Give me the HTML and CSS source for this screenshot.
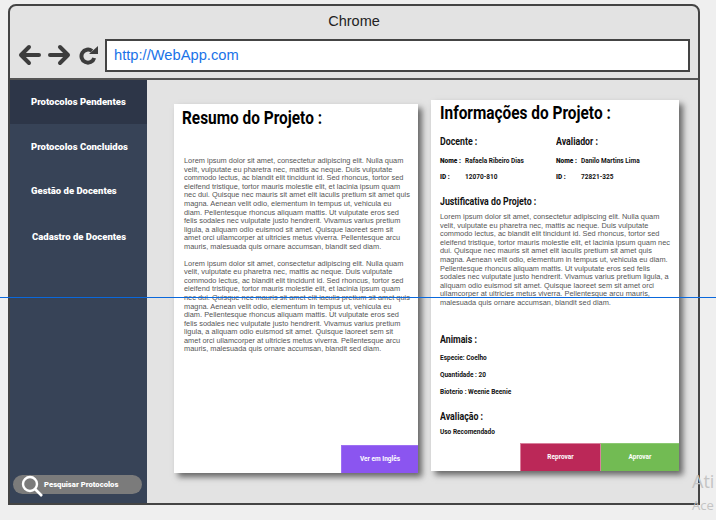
FILE: index.html
```html
<!doctype html>
<html>
<head>
<meta charset="utf-8">
<title>Chrome</title>
<link rel="stylesheet" href="styles.css">
</head>
<body>
<!--janela do navegador-->
<div class="window">
	<div class="title">Chrome</div>
	<div class="toolbar">
		<svg class="tool-icon" width="24" height="24" viewBox="0 0 24 24"><path d="M21 12H3M11 4l-8 8 8 8" fill="none" stroke="#3d3d3d" stroke-width="4" stroke-linecap="round" stroke-linejoin="round"/></svg>
		<svg class="tool-icon" width="24" height="24" viewBox="0 0 24 24"><path d="M3 12h18M13 4l8 8-8 8" fill="none" stroke="#3d3d3d" stroke-width="4" stroke-linecap="round" stroke-linejoin="round"/></svg>
		<svg class="tool-icon" width="22" height="22" viewBox="0 0 22 22"><path d="M18.2 15A6.5 6.5 0 1 1 16 8" fill="none" stroke="#3d3d3d" stroke-width="4"/><path d="M13 11h9V3z" fill="#3d3d3d"/></svg>
		<div class="url">http://WebApp.com</div>
	</div>
	<div class="app">
		<!--menu lateral-->
		<div class="sidebar">
			<div class="nav nav-active">Protocolos Pendentes</div>
			<div class="nav nav-second">Protocolos Concluidos</div>
			<div class="nav">Gestão de Docentes</div>
			<div class="nav nav-last">Cadastro de Docentes</div>
			<div class="search">
				<svg class="search-icon" width="24" height="22" viewBox="0 0 24 22"><circle cx="10" cy="9" r="7" fill="none" stroke="#fff" stroke-width="2.4"/><path d="M15 14l7 7" stroke="#fff" stroke-width="2.6"/></svg>
				<span>Pesquisar Protocolos</span>
			</div>
		</div>
		<div class="content">
			<!--resumo-->
			<div class="card card-left">
				<h1>Resumo do Projeto :</h1>
				<p class="lorem lorem-first">Lorem ipsum dolor sit amet, consectetur adipiscing elit. Nulla quam velit, vulputate eu pharetra nec, mattis ac neque. Duis vulputate commodo lectus, ac blandit elit tincidunt id. Sed rhoncus, tortor sed eleifend tristique, tortor mauris molestie elit, et lacinia ipsum quam nec dui. Quisque nec mauris sit amet elit iaculis pretium sit amet quis magna. Aenean velit odio, elementum in tempus ut, vehicula eu diam. Pellentesque rhoncus aliquam mattis. Ut vulputate eros sed felis sodales nec vulputate justo hendrerit. Vivamus varius pretium ligula, a aliquam odio euismod sit amet. Quisque laoreet sem sit amet orci ullamcorper at ultricies metus viverra. Pellentesque arcu mauris, malesuada quis ornare accumsan, blandit sed diam.</p>
				<p class="lorem">Lorem ipsum dolor sit amet, consectetur adipiscing elit. Nulla quam velit, vulputate eu pharetra nec, mattis ac neque. Duis vulputate commodo lectus, ac blandit elit tincidunt id. Sed rhoncus, tortor sed eleifend tristique, tortor mauris molestie elit, et lacinia ipsum quam nec dui. Quisque nec mauris sit amet elit iaculis pretium sit amet quis magna. Aenean velit odio, elementum in tempus ut, vehicula eu diam. Pellentesque rhoncus aliquam mattis. Ut vulputate eros sed felis sodales nec vulputate justo hendrerit. Vivamus varius pretium ligula, a aliquam odio euismod sit amet. Quisque laoreet sem sit amet orci ullamcorper at ultricies metus viverra. Pellentesque arcu mauris, malesuada quis ornare accumsan, blandit sed diam.</p>
				<div class="actions">
					<div class="btn btn-purple">Ver em Inglês</div>
				</div>
			</div>
			<!--informacoes-->
			<div class="card card-right">
				<h1>Informações do Projeto :</h1>
				<div class="people">
					<div class="person">
						<h2>Docente :</h2>
						<div class="row"><b>Nome :</b><span>Rafaela Ribeiro Dias</span></div>
						<div class="row"><b>ID :</b><span>12070-810</span></div>
					</div>
					<div class="person">
						<h2>Avaliador :</h2>
						<div class="row"><b>Nome :</b><span>Danilo Martins Lima</span></div>
						<div class="row"><b>ID :</b><span>72821-325</span></div>
					</div>
				</div>
				<h2 class="just">Justificativa do Projeto :</h2>
				<p class="lorem lorem-right">Lorem ipsum dolor sit amet, consectetur adipiscing elit. Nulla quam velit, vulputate eu pharetra nec, mattis ac neque. Duis vulputate commodo lectus, ac blandit elit tincidunt id. Sed rhoncus, tortor sed eleifend tristique, tortor mauris molestie elit, et lacinia ipsum quam nec dui. Quisque nec mauris sit amet elit iaculis pretium sit amet quis magna. Aenean velit odio, elementum in tempus ut, vehicula eu diam. Pellentesque rhoncus aliquam mattis. Ut vulputate eros sed felis sodales nec vulputate justo hendrerit. Vivamus varius pretium ligula, a aliquam odio euismod sit amet. Quisque laoreet sem sit amet orci ullamcorper at ultricies metus viverra. Pellentesque arcu mauris, malesuada quis ornare accumsan, blandit sed diam.</p>
				<h2 class="animais">Animais :</h2>
				<div class="info">Especie: Coelho</div>
				<div class="info">Quantidade : 20</div>
				<div class="info">Bioterio : Weenie Beenie</div>
				<h2 class="aval">Avaliação :</h2>
				<div class="info info-uso">Uso Recomendado</div>
				<div class="actions">
					<div class="btn btn-red">Reprovar</div>
					<div class="btn btn-green">Aprovar</div>
				</div>
			</div>
		</div>
	</div>
</div>
<!--linha azul sobre a pagina-->
<div class="guide"></div>
<div class="watermark">Ati<br><small>Ace</small></div>
</body>
</html>
```

FILE: styles.css
```css
*{
	margin:0;
	padding:0;
	box-sizing:border-box;
}
html,body
{
	width:716px;
	height:520px;
	overflow:hidden;
}
body
{
	background-color:#efefef;
	font-family:"Liberation Sans",Arial,sans-serif;
	padding:4px 16px 0 8px;
}
/*janela*/
.window
{
	width:692px;
	height:501px;
	border:2px solid #444;
	border-radius:8px 8px 0 0;
	background-color:#e3e3e3;
	display:flex;
	flex-direction:column;
}
.title
{
	height:27px;
	padding-top:5px;
	text-align:center;
	font-size:14.5px;
	line-height:20px;
	color:#222;
}
.toolbar
{
	height:47px;
	display:flex;
	align-items:flex-start;
	padding:6px 8px 0 8px;
	border-bottom:2px solid #555;
}
.tool-icon
{
	margin-top:4px;
	margin-right:5px;
	flex:none;
}
.url
{
	width:586px;
	height:33px;
	margin-left:2px;
	border:2px solid #444;
	background-color:#fff;
	color:#1a73e8;
	font-size:14.7px;
	line-height:29px;
	padding-left:7px;
}
.app
{
	flex:1;
	display:flex;
	min-height:0;
}
/*menu lateral*/
.sidebar
{
	width:137px;
	background-color:#374357;
	display:flex;
	flex-direction:column;
	font-family:Roboto,sans-serif;
	font-weight:900;
	font-size:9.5px;
	color:#fff;
}
.nav
{
	height:44px;
	line-height:44px;
	padding-left:21px;
}
.nav-active
{
	background-color:#2d3648;
}
.nav-second
{
	margin-top:1px;
}
.nav-last
{
	padding-left:22px;
	margin-top:2px;
}
.search
{
	margin:auto 5px 9px 3px;
	height:19px;
	border-radius:10px;
	background-color:#7b7b7b;
	display:flex;
	align-items:center;
	font-size:7.7px;
	padding-left:7px;
}
.search-icon
{
	margin-right:0;
	margin-top:2px;
}
/*conteudo*/
.content
{
	flex:1;
	display:flex;
	align-items:flex-start;
	padding:20px 0 0 27px;
	gap:13px;
}
.card
{
	background-color:#fff;
	box-shadow:4px 4px 6px rgba(0,0,0,.55);
	display:flex;
	flex-direction:column;
}
.card-left
{
	width:244px;
	height:369px;
	margin-top:4px;
}
.card-right
{
	width:248px;
	height:371px;
}
h1
{
	font-family:Roboto,sans-serif;
	font-weight:700;
	font-size:17.5px;
	line-height:22px;
	color:#000;
	transform:scaleX(.88);
	transform-origin:left;
	white-space:nowrap;
}
.card-left h1
{
	margin:3px 0 0 8px;
}
.card-right h1
{
	margin:2px 0 0 9px;
}
h2
{
	font-family:Roboto,sans-serif;
	font-weight:700;
	font-size:10px;
	line-height:12px;
	color:#111;
	transform:scaleX(.88);
	transform-origin:left;
}
.lorem
{
	font-size:7.4px;
	line-height:8.6px;
	color:#555;
	padding:0 7px 0 10px;
}
.lorem-first
{
	margin-top:28px;
	margin-bottom:8px;
}
.lorem-right
{
	padding:0 7px 0 9px;
	margin-top:5px;
}
.people
{
	display:flex;
	padding:12px 0 0 9px;
}
.person
{
	width:116px;
}
.row
{
	display:flex;
	font-family:Roboto,sans-serif;
	font-weight:700;
	font-size:6.5px;
	color:#111;
	line-height:8px;
	margin-top:8px;
}
.person h2 + .row
{
	margin-top:9px;
}
.row b
{
	width:25px;
}
.just
{
	margin-left:9px;
	margin-top:15px;
}
.animais
{
	margin-left:9px;
	margin-top:26px;
}
.aval
{
	margin-left:9px;
	margin-top:14px;
}
.info
{
	font-family:Roboto,sans-serif;
	font-weight:700;
	font-size:6.5px;
	line-height:9px;
	padding-left:9px;
	color:#111;
	margin-top:8px;
}
.info-uso
{
	margin-top:5px;
}
.actions
{
	margin-top:auto;
	display:flex;
	justify-content:flex-end;
}
.btn
{
	height:28px;
	line-height:26px;
	text-align:center;
	font-family:Roboto,sans-serif;
	font-weight:700;
	font-size:6.5px;
	color:#fff;
	border-top:1px solid transparent;
	border-left:1px solid transparent;
}
.btn-purple
{
	width:77px;
	background-color:#8b55f0;
	border-color:#9d70f3;
}
.btn-red
{
	width:80px;
	background-color:#bb2858;
	border-color:#d9809c;
}
.btn-green
{
	width:79px;
	background-color:#72bb53;
	border-color:#d9809c;
	border-top-color:#8cc972;
}
/*sobrepostos*/
.guide
{
	position:absolute;
	left:0;
	top:297px;
	width:716px;
	height:1px;
	background-color:#0a68dc;
}
.watermark
{
	position:absolute;
	left:692px;
	top:470px;
	font-family:"Open Sans",sans-serif;
	font-size:18px;
	line-height:22px;
	color:#c4c4c4;
	white-space:nowrap;
}
.watermark small
{
	font-size:13px;
}
```
